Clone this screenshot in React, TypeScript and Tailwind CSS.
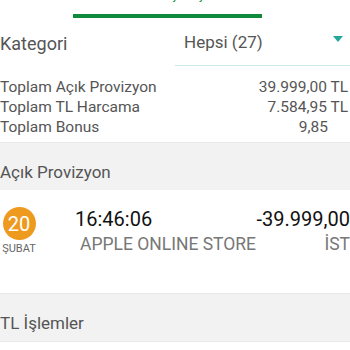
import React from "react";

const summary = [
  { label: "Toplam Açık Provizyon", value: "39.999,00 TL" },
  { label: "Toplam TL Harcama", value: "7.584,95 TL" },
  { label: "Toplam Bonus", value: "9,85" },
];

const App = () => {
  return (
    <div className="w-[350px] h-[350px] overflow-hidden bg-white font-['Roboto',sans-serif] text-[#555]">
      {/* tab header, mostly scrolled off */}
      <div className="h-[20px] relative">
        <div className="absolute left-[150px] top-[-14px] text-[16px] text-[#0f8a3c] leading-[16px]">
          Geçmiş
        </div>
        <div className="absolute left-[73px] top-[14px] w-[189px] h-[4px] bg-[#0f8a3c]" />
      </div>

      {/* category */}
      <div className="flex items-center h-[46px]">
        <div className="text-[18px] w-[175px]">Kategori</div>
        <div className="flex-1 h-full flex items-center border-b border-[#cde9e6] pl-[9px] pr-[7px]">
          <span className="flex-1 text-[17px] text-[#555]">Hepsi (27)</span>
          <svg width="10" height="6" viewBox="0 0 10 6" className="mb-[8px]">
            <path d="M0 0h10L5 6z" fill="#26a69a" />
          </svg>
        </div>
      </div>

      {/* totals */}
      <div className="pt-[11px] pb-[5px] text-[15.5px] leading-[20px]">
        {summary.map((s) => (
          <div key={s.label} className="flex justify-between">
            <span>{s.label}</span>
            <span className={s.value.endsWith("TL") ? "pr-[2px]" : "pr-[22px]"}>{s.value}</span>
          </div>
        ))}
      </div>

      <div className="h-[48px] bg-[#f2f2f2] border-t border-[#e8e8e8] flex items-end pb-[5px] text-[17px]">
        Açık Provizyon
      </div>

      {/* transaction */}
      <div className="flex pt-[17px] h-[103px]">
        <div className="w-[38px] flex flex-col items-center">
          <div className="w-[33px] h-[33px] rounded-full bg-[#ee9a1f] text-white text-[20px] flex items-center justify-center">
            20
          </div>
          <div className="text-[11px] text-[#666] mt-[1px]">ŞUBAT</div>
        </div>
        <div className="flex-1 pl-[37px]">
          <div className="flex justify-between text-[20px] text-[#111] leading-[24px]">
            <span>16:46:06</span>
            <span>-39.999,00</span>
          </div>
          <div className="flex justify-between text-[17.5px] text-[#777] leading-[24px] mt-[1px]">
            <span className="pl-[5px]">APPLE ONLINE STORE</span>
            <span>İST</span>
          </div>
        </div>
      </div>

      <div className="h-[49px] bg-[#f2f2f2] border-t border-[#e8e8e8] border-b flex items-end pb-[5px] text-[17px]">
        TL İşlemler
      </div>
    </div>
  );
};

export default App;
